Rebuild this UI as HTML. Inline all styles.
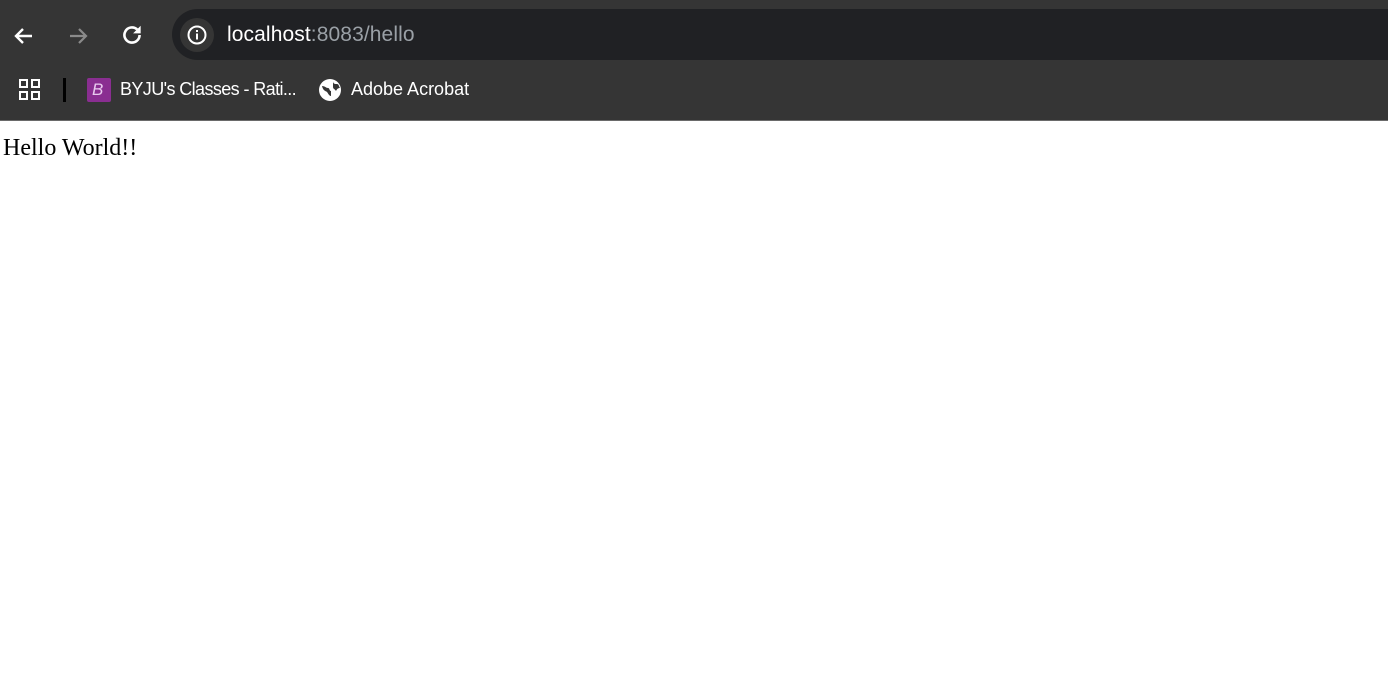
<!DOCTYPE html>
<html><head><style>
*{margin:0;padding:0;box-sizing:border-box}
body{width:1388px;height:684px;background:#fff;overflow:hidden;font-family:"Liberation Sans",sans-serif;position:relative}
#top{position:absolute;left:0;top:0;width:1388px;height:121px;background:#353535;overflow:hidden}
#top:after{content:"";position:absolute;left:0;top:120px;width:100%;height:1px;background:#6a6a6a}
#addr{position:absolute;left:172px;top:9px;width:1300px;height:51px;background:#202124;border-radius:26px}
#info{position:absolute;left:180px;top:18px;width:34px;height:34px;border-radius:50%;background:#353535}
.url{position:absolute;left:227px;top:23px;font-size:21px;color:#fff;letter-spacing:0.1px}
.url span{color:#9aa0a6}
.bm{position:absolute;top:79px;font-size:18px;color:#fff}
#hello{position:absolute;left:3px;top:135px;font-family:"Liberation Serif",serif;font-size:24px;color:#000}
</style></head><body>
<div id="top">
<svg style="position:absolute;left:12px;top:24px" width="24" height="24" viewBox="0 0 24 24"><path d="M20 12H5M11 5l-7 7 7 7" fill="none" stroke="#fff" stroke-width="2.4"/></svg>
<svg style="position:absolute;left:66px;top:24px" width="24" height="24" viewBox="0 0 24 24"><path d="M4 12h15M13 5l7 7-7 7" fill="none" stroke="#8a8a8a" stroke-width="2.2"/></svg>
<svg style="position:absolute;left:119px;top:22px" width="26" height="26" viewBox="0 0 24 24"><path d="M19 12a7 7 0 1 1-2.2-5.1" fill="none" stroke="#fff" stroke-width="2.4"/><path d="M20 3.5v7h-7z" fill="#fff"/></svg>
<div id="addr"></div>
<div id="info"></div>
<svg style="position:absolute;left:186px;top:24px" width="22" height="22" viewBox="0 0 22 22"><circle cx="11" cy="11" r="8.5" fill="none" stroke="#fff" stroke-width="2"/><rect x="10" y="9.5" width="2" height="6" fill="#fff"/><rect x="10" y="6" width="2" height="2" fill="#fff"/></svg>
<div class="url">localhost<span>:8083/hello</span></div>
<svg style="position:absolute;left:19px;top:79px" width="22" height="22" viewBox="0 0 22 22"><g fill="none" stroke="#fff" stroke-width="2"><rect x="1" y="1" width="7" height="7"/><rect x="13" y="1" width="7" height="7"/><rect x="1" y="13" width="7" height="7"/><rect x="13" y="13" width="7" height="7"/></g></svg>
<div style="position:absolute;left:63px;top:78px;width:3px;height:24px;background:#000"></div>
<div style="position:absolute;left:87px;top:78px;width:24px;height:24px;background:#8a2e91;border-radius:2px"></div>
<div style="position:absolute;left:92px;top:80px;font-size:17px;color:#e8c9ee;font-style:italic">B</div>
<div class="bm" style="left:120px;letter-spacing:-0.6px">BYJU's Classes - Rati...</div>
<svg style="position:absolute;left:318px;top:78px" width="24" height="24" viewBox="0 0 24 24"><circle cx="12" cy="12" r="11" fill="#fff"/><path d="M4 8c3 0 4 2 6 2s1 3 3 3v5c-2 0-3-3-4-4s-4-1-5-6zM15 3c0 3 2 3 4 3s2 3 3 4c-2 0-3 1-4 3-1-2-3-2-3-4s0-4 0-6z" fill="#353535"/></svg>
<div class="bm" style="left:351px">Adobe Acrobat</div>
</div>
<div id="hello">Hello World!!</div>
</body></html>
